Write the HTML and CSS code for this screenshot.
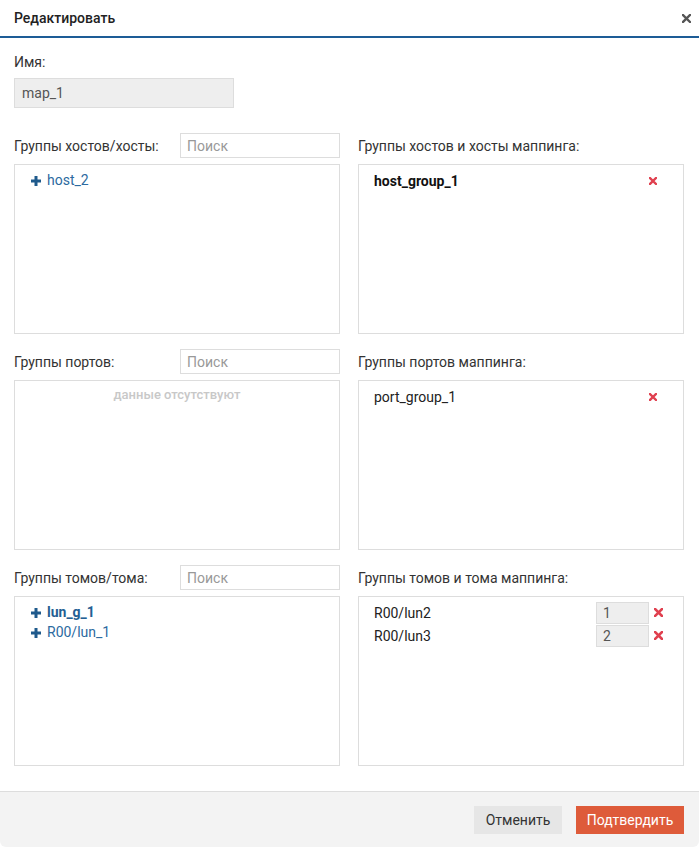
FILE: index.html
```html
<!DOCTYPE html>
<html lang="ru">
<head>
<meta charset="utf-8">
<title>Редактировать</title>
<link rel="stylesheet" href="styles.css">
</head>
<body>
<div class="modal">
  <div class="modal-header">
    <span class="modal-title">Редактировать</span>
    <span class="close">
      <svg width="9" height="9" viewBox="0 0 9 9"><path d="M1 1L8 8M8 1L1 8" stroke="#555" stroke-width="2.4" stroke-linecap="square"/></svg>
    </span>
  </div>
  <div class="modal-body">
    <div class="field-label">Имя:</div>
    <div class="name-input">map_1</div>

    <div class="panels">
      <div class="panel">
        <div class="panel-head">
          <span class="label">Группы хостов/хосты:</span>
          <input class="search" type="text" placeholder="Поиск">
        </div>
        <div class="list list-left">
          <div class="src-item"><svg class="plus" width="10" height="10" viewBox="0 0 10 10"><path d="M5 0V10M0 5H10" stroke="#1f5a8c" stroke-width="3"/></svg><span>host_2</span></div>
        </div>
      </div>
      <div class="panel">
        <div class="panel-head">
          <span class="label">Группы хостов и хосты маппинга:</span>
        </div>
        <div class="list list-right">
          <div class="dst-item wide"><span class="bold">host_group_1</span><svg class="del" width="8" height="8" viewBox="0 0 8 8"><path d="M1 1L7 7M7 1L1 7" stroke="#e0404f" stroke-width="2.4" stroke-linecap="square"/></svg></div>
        </div>
      </div>

      <div class="panel">
        <div class="panel-head">
          <span class="label">Группы портов:</span>
          <input class="search" type="text" placeholder="Поиск">
        </div>
        <div class="list list-empty">
          <div class="empty">данные отсутствуют</div>
        </div>
      </div>
      <div class="panel">
        <div class="panel-head">
          <span class="label">Группы портов маппинга:</span>
        </div>
        <div class="list list-right">
          <div class="dst-item wide"><span>port_group_1</span><svg class="del" width="8" height="8" viewBox="0 0 8 8"><path d="M1 1L7 7M7 1L1 7" stroke="#e0404f" stroke-width="2.4" stroke-linecap="square"/></svg></div>
        </div>
      </div>

      <div class="panel">
        <div class="panel-head">
          <span class="label">Группы томов/тома:</span>
          <input class="search" type="text" placeholder="Поиск">
        </div>
        <div class="list list-left">
          <div class="src-item"><svg class="plus" width="10" height="10" viewBox="0 0 10 10"><path d="M5 0V10M0 5H10" stroke="#1f5a8c" stroke-width="3"/></svg><span class="bold">lun_g_1</span></div>
          <div class="src-item"><svg class="plus" width="10" height="10" viewBox="0 0 10 10"><path d="M5 0V10M0 5H10" stroke="#1f5a8c" stroke-width="3"/></svg><span>R00/lun_1</span></div>
        </div>
      </div>
      <div class="panel">
        <div class="panel-head">
          <span class="label">Группы томов и тома маппинга:</span>
        </div>
        <div class="list list-right">
          <div class="dst-item"><span class="grow">R00/lun2</span><span class="lun-num">1</span><svg class="del" width="9" height="9" viewBox="0 0 9 9"><path d="M1 1L8 8M8 1L1 8" stroke="#e0404f" stroke-width="2.6" stroke-linecap="square"/></svg></div>
          <div class="dst-item"><span class="grow">R00/lun3</span><span class="lun-num">2</span><svg class="del" width="9" height="9" viewBox="0 0 9 9"><path d="M1 1L8 8M8 1L1 8" stroke="#e0404f" stroke-width="2.6" stroke-linecap="square"/></svg></div>
        </div>
      </div>
    </div>
  </div>
  <div class="modal-footer">
    <button class="btn btn-cancel" type="button">Отменить</button>
    <button class="btn btn-confirm" type="button">Подтвердить</button>
  </div>
</div>
</body>
</html>
```

FILE: styles.css
```css
* { box-sizing: border-box; }

html, body {
  margin: 0;
  padding: 0;
  background: #fff;
}

body {
  font-family: Roboto, "Liberation Sans", Arial, sans-serif;
  font-size: 14px;
  color: #333;
}

.modal {
  width: 699px;
  height: 847px;
  display: flex;
  flex-direction: column;
  background: #fff;
  border-radius: 0 0 6px 6px;
  overflow: hidden;
}

.modal-header {
  height: 38px;
  border-bottom: 2px solid #1d5c96;
  display: flex;
  align-items: center;
  justify-content: space-between;
  padding: 0 8px 0 14px;
}

.modal-title {
  font-weight: 500;
  font-size: 14px;
  color: #222;
}

.close {
  display: flex;
  width: 9px;
  height: 9px;
  margin-top: 1px;
}

.modal-body {
  flex: 1;
  padding: 16px 15px 0 14px;
}

.field-label {
  height: 16px;
  line-height: 16px;
  color: #333;
}

.name-input {
  margin-top: 8px;
  width: 220px;
  height: 30px;
  line-height: 28px;
  padding: 0 7px;
  background: #eee;
  border: 1px solid #ddd;
  color: #555;
}

.panels {
  margin-top: 25px;
  display: grid;
  grid-template-columns: 326px 326px;
  column-gap: 18px;
  row-gap: 15px;
}

.panel-head {
  height: 25px;
  display: flex;
  align-items: center;
  justify-content: space-between;
}

.label {
  color: #333;
}

.search {
  width: 160px;
  height: 25px;
  border: 1px solid #ddd;
  padding: 0 6px;
  font-family: inherit;
  font-size: 14px;
  color: #333;
  outline: none;
}

.search::placeholder {
  color: #999;
}

.list {
  margin-top: 6px;
  height: 170px;
  border: 1px solid #ddd;
}

.list-left {
  padding: 5px 0 0 16px;
}

.src-item {
  height: 20px;
  display: flex;
  align-items: center;
  gap: 6px;
  color: #2c6aa0;
}

.src-item .bold {
  font-weight: 700;
  color: #245f93;
}

.plus {
  flex: none;
  margin-top: 1px;
}

.list-right {
  padding: 4px 20px 0 15px;
}

.dst-item {
  height: 23px;
  display: flex;
  align-items: center;
  color: #222;
}

.dst-item.wide {
  justify-content: space-between;
  padding-right: 6px;
}

.dst-item .bold {
  font-weight: 700;
  color: #111;
}

.grow {
  flex: 1;
}

.lun-num {
  width: 53px;
  height: 22px;
  line-height: 20px;
  padding: 0 6px;
  background: #eee;
  border: 1px solid #ddd;
  color: #555;
  margin-right: 5px;
}

.del {
  flex: none;
}

.list-empty {
  padding-top: 6px;
}

.empty {
  text-align: center;
  color: #c8c8c8;
  font-weight: 500;
  font-size: 13px;
  line-height: 16px;
}

.modal-footer {
  height: 56px;
  border-top: 1px solid #ddd;
  background: #f3f3f3;
  display: flex;
  align-items: center;
  justify-content: flex-end;
  gap: 14px;
  padding: 0 15px 0 0;
}

.btn {
  height: 28px;
  border: none;
  font-family: inherit;
  font-size: 14px;
  padding: 0;
  cursor: pointer;
}

.btn-cancel {
  width: 88px;
  background: #e6e6e6;
  color: #333;
}

.btn-confirm {
  width: 108px;
  background: #de5b3a;
  color: #fff;
}
```
